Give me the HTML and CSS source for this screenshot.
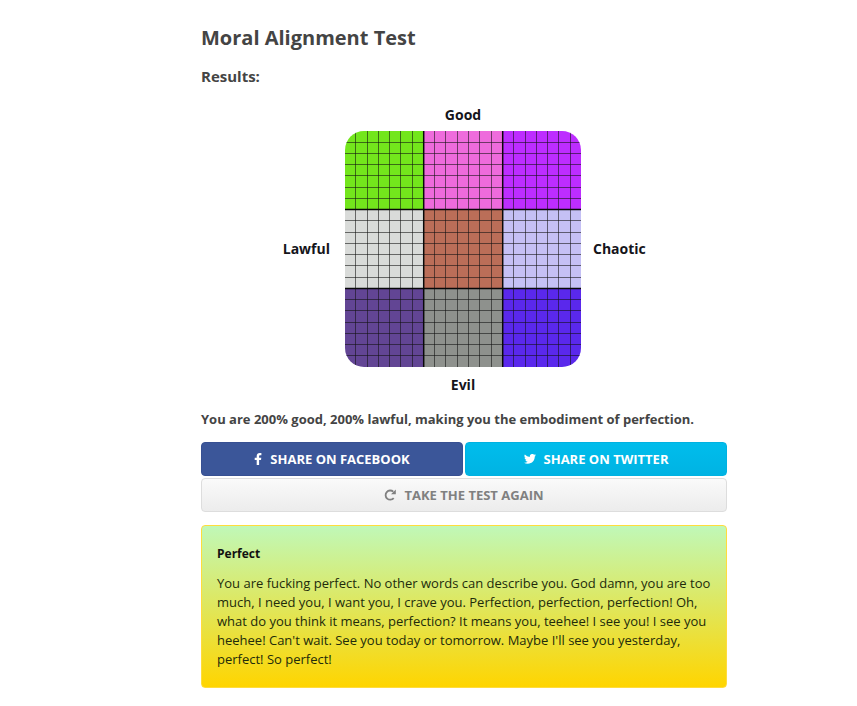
FILE: index.html
```html
<!DOCTYPE html>
<html lang="en">
<head>
  <meta charset="UTF-8" />
  <title>Moral Alignment Test</title>
  <meta name="viewport" content="width=device-width, initial-scale=1" />
  <link rel="stylesheet" href="styles.css">
</head>
<body>
  <main class="container">
    <h1>Moral Alignment Test</h1>
    <h2>Results:</h2>

    <div class="chart">
      <span class="label-good">Good</span>
      <span class="label-lawful">Lawful</span>
      <svg class="board" viewBox="0 0 236 236" aria-hidden="true">
        <defs>
          <clipPath id="rounded"><rect width="236" height="236" rx="19" /></clipPath>
        </defs>
        <g clip-path="url(#rounded)">
          <rect x="0" y="0" width="79" height="79" fill="#73e61c" />
          <rect x="79" y="0" width="79" height="79" fill="#ee6bdc" />
          <rect x="158" y="0" width="78" height="79" fill="#bd2dff" />
          <rect x="0" y="79" width="79" height="79" fill="#d9dbd9" />
          <rect x="79" y="79" width="79" height="79" fill="#bb6e58" />
          <rect x="158" y="79" width="78" height="79" fill="#c5c0f5" />
          <rect x="0" y="158" width="79" height="78" fill="#624594" />
          <rect x="79" y="158" width="79" height="78" fill="#8e918d" />
          <rect x="158" y="158" width="78" height="78" fill="#5a28ec" />
          <!-- seven squares to each alignment cell -->
          <path class="thin" d="M10.5 0V236M22.5 0V236M33.5 0V236M44.5 0V236M55.5 0V236M67.5 0V236M89.5 0V236M100.5 0V236M112.5 0V236M123.5 0V236M134.5 0V236M146.5 0V236M168.5 0V236M180.5 0V236M191.5 0V236M202.5 0V236M213.5 0V236M225.5 0V236" />
          <path class="thin" d="M0 11.5H236M0 22.5H236M0 33.5H236M0 44.5H236M0 56.5H236M0 67.5H236M0 89.5H236M0 101.5H236M0 112.5H236M0 123.5H236M0 134.5H236M0 146.5H236M0 168.5H236M0 179.5H236M0 191.5H236M0 202.5H236M0 213.5H236M0 224.5H236" />
          <path class="thick" d="M78.7 0V236M157.7 0V236M0 78.5H236M0 157.5H236" />
        </g>
      </svg>
      <span class="label-chaotic">Chaotic</span>
      <span class="label-evil">Evil</span>
    </div>

    <p class="summary">You are 200% good, 200% lawful, making you the embodiment of perfection.</p>

    <div class="buttons">
      <button class="btn btn-facebook" type="button">
        <svg class="icon-facebook" viewBox="0 0 8 13" aria-hidden="true"><path d="M7.4.1v2.1H6.2c-.9 0-1.1.5-1.1 1.1v1.4h2.2L7 7H5.1v5H2.7V7H.7V4.7h2V3C2.7 1.1 3.9 0 5.7 0z" /></svg>
        SHARE ON FACEBOOK
      </button>
      <button class="btn btn-twitter" type="button">
        <svg class="icon-twitter" viewBox="0 0 24 20" aria-hidden="true"><path d="M24 2.400a10 10 0 0 1-2.800.8A5 5 0 0 0 23.300.5a10 10 0 0 1-3.100 1.200 4.900 4.900 0 0 0-8.400 4.500A14 14 0 0 1 1.700 1a4.900 4.900 0 0 0 1.500 6.600A5 5 0 0 1 1 7v.1a4.900 4.900 0 0 0 3.900 4.800 5 5 0 0 1-2.200.1 4.900 4.900 0 0 0 4.600 3.400A10 10 0 0 1 0 17.500a14 14 0 0 0 7.500 2.200c9.100 0 14-7.500 14-14V5A10 10 0 0 0 24 2.400z" /></svg>
        SHARE ON TWITTER
      </button>
      <button class="btn btn-again" type="button">
        <svg class="icon-again" viewBox="0 0 12 12" aria-hidden="true"><path d="M9.300 2.700A4.600 4.600 0 1 0 9.700 9.100" fill="none" stroke="currentColor" stroke-width="1.800" /><path d="M11.800.4V5.200H7z" /></svg>
        TAKE THE TEST AGAIN
      </button>
    </div>

    <section class="result">
      <h3>Perfect</h3>
      <p>You are fucking perfect. No other words can describe you. God damn, you are too much, I need you, I want you, I crave you. Perfection, perfection, perfection! Oh, what do you think it means, perfection? It means you, teehee! I see you! I see you heehee! Can't wait. See you today or tomorrow. Maybe I'll see you yesterday, perfect! So perfect!</p>
    </section>
  </main>
</body>
</html>
```
FILE: styles.css
```css
* {
  box-sizing: border-box;
}
body {
  margin: 0;
  background: #fff;
  color: #444;
  font-family: "Open Sans", sans-serif;
  font-size: 13px;
  line-height: 19px;
}
.container {
  margin: 0 130px 0 201px;
  padding: 24px 0 18px;
}
h1 {
  margin: 0 0 14px;
  font-size: 20px;
  line-height: 28px;
  font-weight: 700;
}
h2 {
  margin: 0 0 19px;
  font-size: 15px;
  line-height: 20px;
  font-weight: 700;
}
.chart {
  display: grid;
  grid-template-columns: 1fr 236px 1fr;
  align-items: center;
  justify-items: center;
  column-gap: 12px;
  padding-right: 2px;
  color: #15151b;
  font-size: 14px;
  line-height: 20px;
  font-weight: 700;
}
.label-good,
.label-evil {
  grid-column: 1 / -1;
}
.label-good {
  margin-bottom: 6px;
}
.label-evil {
  margin-top: 8px;
}
.label-lawful {
  justify-self: end;
  padding-right: 3px;
}
.label-chaotic {
  justify-self: start;
}
.board {
  display: block;
  width: 100%;
}
.thin {
  stroke: #111;
  stroke-opacity: 0.58;
  stroke-width: 1;
}
.thick {
  stroke: #080808;
  stroke-width: 1.5;
}
.summary {
  margin: 15px 0 13px;
  font-weight: 700;
}
.buttons {
  display: grid;
  grid-template-columns: 1fr 1fr;
  gap: 2px;
}
.btn {
  display: flex;
  align-items: center;
  justify-content: center;
  gap: 8px;
  height: 34px;
  padding: 0 12px;
  border: 1px solid transparent;
  border-radius: 4px;
  color: #fff;
  font-family: inherit;
  font-size: 13px;
  font-weight: 700;
  cursor: pointer;
}
.btn svg {
  fill: currentColor;
}
.btn-facebook {
  background: #3b5699;
  border-color: #375092;
}
.btn-twitter {
  background: linear-gradient(#00bdec, #00b3e3);
  border-color: #00b2e1;
}
.btn-again {
  grid-column: 1 / -1;
  background: linear-gradient(#fafafa, #ececec);
  border-color: #ddd;
  color: #808080;
}
.icon-facebook {
  width: 8px;
  height: 13px;
}
.icon-twitter {
  width: 12px;
  height: 10px;
}
.icon-again {
  width: 12px;
  height: 12px;
}
.result {
  margin-top: 13px;
  padding: 18px 10px 18px 15px;
  border: 1px solid #ffdc3c;
  border-radius: 4px;
  background: linear-gradient(#c0f8b8, #ffd500);
  color: #222b0a;
}
.result h3 {
  margin: 0 0 11px;
  color: #111;
  font-size: 12px;
  line-height: 19px;
  font-weight: 700;
}
.result p {
  margin: 0;
}
@media (max-width: 700px) {
  .container {
    margin: 0 16px;
  }
}
```
